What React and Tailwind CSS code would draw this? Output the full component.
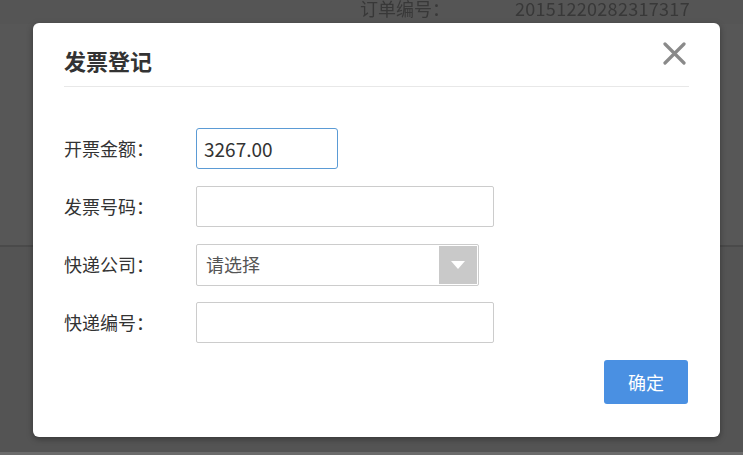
import React from 'react';

const font = { fontFamily: '"Noto Sans CJK SC", "Liberation Sans", sans-serif' };

const Row = ({ label, children }) => (
    <div className="flex items-center h-[41px]">
        <div className="w-[132px] text-[18px] text-[#333]">{label}</div>
        {children}
    </div>
);

const App = () => {
    return (
        <div className="relative w-[743px] h-[455px] overflow-hidden bg-[#555555]" style={font}>
            {/* page behind the overlay */}
            <div className="flex flex-col h-full">
                <div className="flex h-[24px] items-start pl-[360px] pt-[1px] text-[18px] leading-[14px] text-[#383838] blur-[0.5px]">
                    <span className="w-[155px]">订单编号：</span>
                    <span className="tracking-[0.3px]">20151220282317317</span>
                </div>
                <div className="h-[221px] bg-[#575757]" />
                <div className="h-[2px] bg-[#4a4a4a]" />
                <div className="flex-1 bg-[#545454]" />
                <div className="h-[3px] bg-[#6b6b6b]" />
            </div>

            {/* dialog */}
            <div className="absolute left-[33px] top-[23px] w-[687px] bg-white rounded-[6px] shadow-[0_2px_6px_rgba(0,0,0,0.35)] px-[31px] pb-[33px]">
                <div className="flex justify-between items-start pt-[22px] pb-[11px] border-b border-[#e8e8e8]">
                    <h2 className="text-[22px] leading-[30px] font-bold text-[#333]">发票登记</h2>
                    <button className="mt-[-5px] mr-[2px] w-[26px] h-[26px] flex items-center justify-center">
                        <svg width="23" height="23" viewBox="0 0 23 23">
                            <path d="M2 2 L21 21 M21 2 L2 21" stroke="#8a8a8a" strokeWidth="3.2" strokeLinecap="round" />
                        </svg>
                    </button>
                </div>

                <div className="flex flex-col gap-[17px] mt-[41px]">
                    <Row label="开票金额：">
                        <input
                            defaultValue="3267.00"
                            className="w-[142px] h-[41px] border border-[#5b9bd5] rounded-[3px] px-[7px] text-[19px] text-[#333] outline-none"
                            style={font}
                        />
                    </Row>
                    <Row label="发票号码：">
                        <input className="w-[298px] h-[41px] border border-[#cccccc] rounded-[2px] outline-none" />
                    </Row>
                    <Row label="快递公司：">
                        <div className="w-[283px] h-[42px] border border-[#cccccc] rounded-[2px] flex items-center justify-between pl-[9px] pr-[1px]">
                            <span className="text-[18px] text-[#555]">请选择</span>
                            <span className="w-[38px] h-[38px] bg-[#c9c9c9] flex items-center justify-center">
                                <svg width="16" height="10" viewBox="0 0 16 10">
                                    <path d="M1 1 H15 L8 9 Z" fill="#ffffff" />
                                </svg>
                            </span>
                        </div>
                    </Row>
                    <Row label="快递编号：">
                        <input className="w-[298px] h-[41px] border border-[#cccccc] rounded-[2px] outline-none" />
                    </Row>
                </div>

                <div className="flex justify-end mt-[17px] pr-[1px]">
                    <button className="w-[84px] h-[44px] rounded-[3px] bg-[#4a90e2] text-white text-[18px]" style={font}>确定</button>
                </div>
            </div>
        </div>
    );
};

export default App;
